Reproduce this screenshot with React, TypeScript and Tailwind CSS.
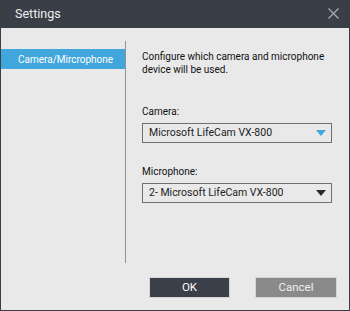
const font = { fontFamily: 'Roboto, "Liberation Sans", sans-serif' };

function Select({ value, arrow }: { value: string; arrow: string }) {
  return (
    <div className="flex h-[20px] w-[190px] items-center justify-between border border-[#707070] bg-[#e9e9e9] pl-[6px] pr-[5px]">
      <span className="whitespace-nowrap text-[10.5px] leading-none text-[#222]">{value}</span>
      <svg width="10" height="7" viewBox="0 0 10 7">
        <path d="M0 0 H10 L5 6 Z" fill={arrow} />
      </svg>
    </div>
  );
}

export default function App() {
  return (
    <div className="flex h-[311px] w-[350px] flex-col border-x border-b border-[#3a3e47] bg-[#e9e9e9]" style={font}>
      {/* title bar */}
      <div className="flex h-[28px] shrink-0 items-center justify-between bg-[#3a3e47] pl-[14px] pr-[10px]">
        <span className="text-[12.5px] text-[#f0f0f0]">Settings</span>
        <svg width="11" height="11" viewBox="0 0 11 11" className="mt-[-1px]">
          <path d="M0.5 0.5 L10.5 10.5 M10.5 0.5 L0.5 10.5" stroke="#a9acb2" strokeWidth="1.2" />
        </svg>
      </div>

      <div className="flex h-[235px] shrink-0">
        <div className="w-[124px] shrink-0 pt-[21px]">
          <div className="flex h-[20px] items-center whitespace-nowrap bg-[#41a6dc] pl-[17px] text-[10px] text-white">
            Camera/Mircrophone
          </div>
        </div>
        <div className="mt-[13px] h-[222px] w-px shrink-0 bg-[#8f939d]" />
        <div className="flex flex-col pl-[16px] pt-[22px] text-[10px] text-[#111]">
          <p className="whitespace-nowrap leading-[13px]">
            Configure which camera and microphone
            <br />
            device will be used.
          </p>
          <div className="mt-[31px] leading-none">Camera:</div>
          <div className="mt-[6px]">
            <Select value="Microsoft LifeCam VX-800" arrow="#45a5dd" />
          </div>
          <div className="mt-[24px] leading-none">Microphone:</div>
          <div className="mt-[6px]">
            <Select value="2- Microsoft LifeCam VX-800" arrow="#2b2b2b" />
          </div>
        </div>
      </div>

      <div className="flex justify-end gap-[25px] pr-[12px] pt-[14px]">
        <button className="h-[21px] w-[81px] border border-[#d4d4d4] bg-[#3a3f49] text-[11.5px] text-white">OK</button>
        <button className="h-[21px] w-[82px] border border-[#d4d4d4] bg-[#8a8a8a] text-[11.5px] text-[#f0f0f0]">Cancel</button>
      </div>
    </div>
  );
}
